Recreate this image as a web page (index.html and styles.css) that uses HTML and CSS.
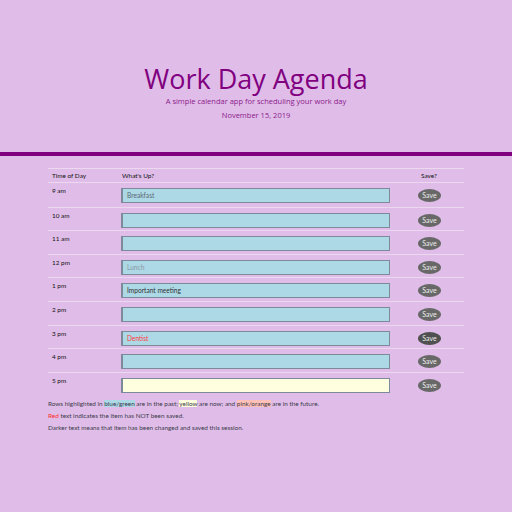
FILE: index.html
```html
<!DOCTYPE html>
<html>
<head>
<meta charset="utf-8">
<link rel="stylesheet" href="styles.css">
</head>
<body>
<header class="hero">
  <h1 class="title">Work Day Agenda</h1>
  <p class="lead">A simple calendar app for scheduling your work day</p>
  <p class="date">November 15, 2019</p>
</header>
<div class="bar"></div>
<main class="agenda">
  <div class="row head">
    <div class="c-time">Time of Day</div>
    <div class="c-what">What's Up?</div>
    <div class="c-save">Save?</div>
  </div>
  <div class="row"><div class="c-time">9 am</div><div class="c-what"><div class="field past t-saved">Breakfast</div></div><div class="c-save"><button class="btn">Save</button></div></div>
  <div class="row"><div class="c-time">10 am</div><div class="c-what"><div class="field past"></div></div><div class="c-save"><button class="btn">Save</button></div></div>
  <div class="row"><div class="c-time">11 am</div><div class="c-what"><div class="field past"></div></div><div class="c-save"><button class="btn">Save</button></div></div>
  <div class="row"><div class="c-time">12 pm</div><div class="c-what"><div class="field past t-light">Lunch</div></div><div class="c-save"><button class="btn">Save</button></div></div>
  <div class="row"><div class="c-time">1 pm</div><div class="c-what"><div class="field past t-dark">Important meeting</div></div><div class="c-save"><button class="btn">Save</button></div></div>
  <div class="row"><div class="c-time">2 pm</div><div class="c-what"><div class="field past"></div></div><div class="c-save"><button class="btn">Save</button></div></div>
  <div class="row"><div class="c-time">3 pm</div><div class="c-what"><div class="field past t-red">Dentist</div></div><div class="c-save"><button class="btn btn-dark">Save</button></div></div>
  <div class="row"><div class="c-time">4 pm</div><div class="c-what"><div class="field past"></div></div><div class="c-save"><button class="btn">Save</button></div></div>
  <div class="row last"><div class="c-time">5 pm</div><div class="c-what"><div class="field now"></div></div><div class="c-save"><button class="btn">Save</button></div></div>
  <div class="notes">
    <p>Rows highlighted in <span class="hl-blue">blue/green</span> are in the past; <span class="hl-yellow">yellow</span> are now; and <span class="hl-pink">pink/orange</span> are in the future.</p>
    <p><span class="red">Red</span> text indicates the item has NOT been saved.</p>
    <p>Darker text means that item has been changed and saved this session.</p>
  </div>
</main>
</body>
</html>
```
FILE: styles.css
```css
html, body {
  margin: 0;
  padding: 0;
  background: #e0bde8;
}
body {
  font-family: "Open Sans", sans-serif;
  color: #222;
}
.hero {
  padding-top: 62px;
  height: 92px;
  box-sizing: border-box;
  text-align: center;
}
.title {
  margin: 0;
  font-weight: 400;
  font-size: 27px;
  line-height: 34px;
  color: #800080;
}
.lead {
  margin: 0;
  font-size: 7.5px;
  line-height: 11px;
  color: #8b1a8b;
}
.date {
  margin: 3px 0 0;
  font-size: 7.5px;
  line-height: 11px;
  color: #8b1a8b;
}
.bar {
  margin-top: 60px;
  height: 4px;
  background: #800080;
}
.agenda {
  width: 416px;
  margin: 12px auto 0 48px;
  font-family: "Lato", sans-serif;
  font-size: 6.4px;
}
.row {
  display: grid;
  grid-template-columns: 70px 296px 50px;
  height: 23.6px;
  border-top: 1px solid #ecd9ef;
  box-sizing: border-box;
}
.row.head {
  height: 15px;
  align-items: center;
  border-bottom: 1px solid #ecd9ef;
}
.row.head + .row { border-top: none; }
.c-time {
  padding: 4px 0 0 4px;
  color: #111;
}
.head .c-time, .head .c-what, .head .c-save { padding-top: 0; color: #111; }
.c-what {
  padding: 5px 0 0 3px;
}
.head .c-what { padding-left: 4px; }
.c-save {
  padding: 6px 0 0 4px;
}
.head .c-save { padding-left: 7px; }
.field {
  width: 269px;
  height: 15px;
  box-sizing: border-box;
  border: 1px solid #7d8a99;
  border-left-width: 2px;
  border-top-width: 1.5px;
  padding-left: 4px;
  font-size: 6.6px;
  line-height: 12px;
  color: #5a6a72;
}
.past { background: #add8e6; }
.now { background: #ffffe0; }
.t-light { color: #8a9aa2; }
.t-dark { color: #333; }
.t-red { color: #ff3b3b; }
.btn {
  display: block;
  width: 23px;
  height: 13px;
  padding: 0;
  border: none;
  border-radius: 50%;
  background: #686868;
  color: #ececec;
  font-family: "Lato", sans-serif;
  font-size: 7px;
  line-height: 13px;
  text-align: center;
}
.btn-dark { background: #505050; }
.notes {
  padding-top: 3px;
}
.notes p {
  margin: 0;
  line-height: 12px;
  color: #3a3a4a;
}
.hl-blue { background: #add8e6; }
.hl-yellow { background: #ffffe0; }
.hl-pink { background: #ffc0b8; }
.red { color: #ff2a2a; }
```
